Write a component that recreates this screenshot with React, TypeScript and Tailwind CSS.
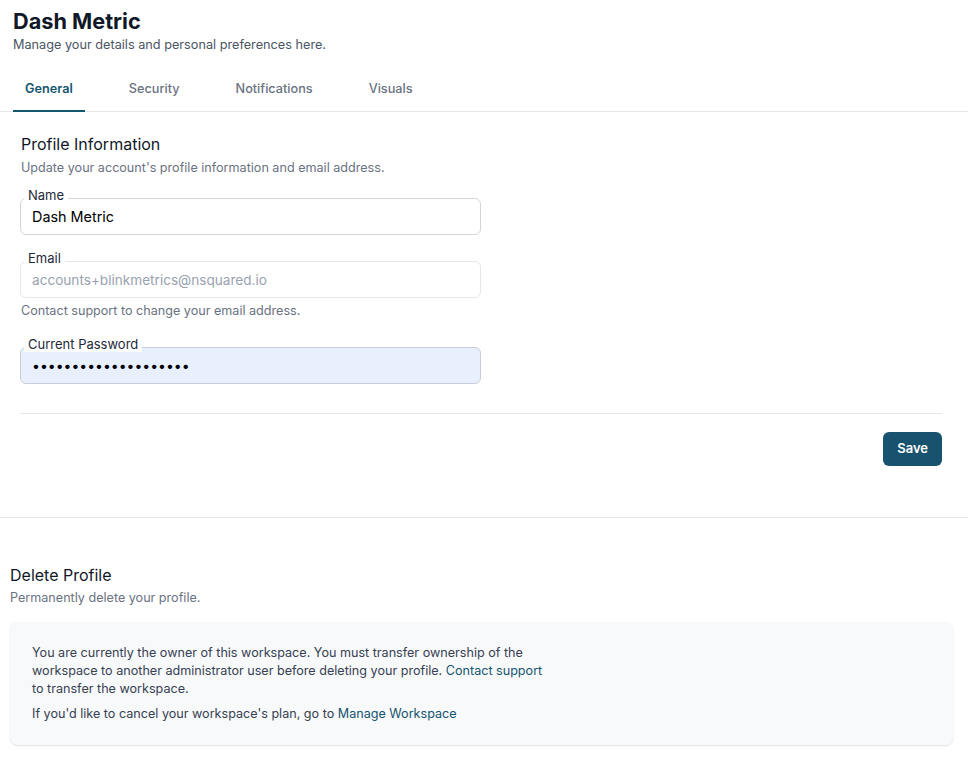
import React from "react";

const tabs = ["General", "Security", "Notifications", "Visuals"];

function Field({
  label,
  value,
  type = "text",
  disabled = false,
  filled = false,
}: {
  label: string;
  value: string;
  type?: string;
  disabled?: boolean;
  filled?: boolean;
}) {
  return (
    <div className="relative w-[461px]">
      <span className="absolute left-[4px] -top-[11px] z-10 bg-white px-[4px] text-[13px] leading-[16px] text-gray-800">
        {label}
      </span>
      <input
        type={type}
        defaultValue={value}
        disabled={disabled}
        className={`h-[37px] w-full rounded-md border px-[11px] outline-none ${
          disabled
            ? "border-gray-200 bg-white text-[13.6px] text-gray-400"
            : filled
            ? "border-[#c9ced6] bg-[#e8f0fe] text-[14px] text-black"
            : "border-gray-300 bg-white text-[14.4px] text-black"
        }`}
      />
    </div>
  );
}

export default function App() {
  return (
    <div className="min-h-screen bg-white font-['Inter',sans-serif] text-gray-900">
      <header className="px-[13px] pt-[7px]">
        <h1 className="text-[21.7px] font-bold leading-[28px] text-[#111827]">
          Dash Metric
        </h1>
        <p className="text-[12.7px] leading-[20px] text-gray-600">
          Manage your details and personal preferences here.
        </p>
      </header>

      <nav className="mt-[12px] flex gap-[32px] border-b border-gray-200 pl-[13px]">
        {tabs.map((tab, i) => (
          <button
            key={tab}
            className={`-mb-px flex h-[45px] items-center border-b-2 px-3 text-[12.7px] ${
              i === 0
                ? "border-[#155570] font-semibold text-[#155570]"
                : "border-transparent font-medium text-gray-500"
            }`}
          >
            {tab}
          </button>
        ))}
      </nav>

      <section className="border-b border-gray-200 pl-[20px] pr-[26px] pt-[20px] pb-[51px]">
        <h2 className="pl-px text-[16px] leading-[24px] text-gray-900">
          Profile Information
        </h2>
        <p className="mt-[2px] pl-px text-[12.6px] leading-[20px] text-gray-500">
          Update your account's profile information and email address.
        </p>

        <div className="mt-[20px] flex flex-col">
          <Field label="Name" value="Dash Metric" />
          <div className="mt-[26px]">
            <Field
              label="Email"
              value="accounts+blinkmetrics@nsquared.io"
              disabled
            />
          </div>
          <p className="mt-[3px] pl-px text-[12.6px] leading-[20px] text-gray-500">
            Contact support to change your email address.
          </p>
          <div className="mt-[26px]">
            <Field
              label="Current Password"
              value="passwordpassword1234"
              type="password"
              filled
            />
          </div>
        </div>

        <div className="mt-[29px] border-t border-gray-200" />
        <div className="mt-[18px] flex justify-end">
          <button className="h-[34px] rounded-md bg-[#17536e] px-[14px] text-[13px] font-semibold text-white">
            Save
          </button>
        </div>
      </section>

      <section className="px-[10px] pr-[15px] pt-[45px] pb-[14px]">
        <h2 className="text-[16px] leading-[24px] text-gray-900">
          Delete Profile
        </h2>
        <p className="mt-px text-[12.6px] leading-[20px] text-gray-500">
          Permanently delete your profile.
        </p>
        <div className="mt-[14px] rounded-lg bg-[#f8f9fa] pl-[22px] pr-4 pt-[22px] pb-[22px] text-[12.6px] leading-[18px] text-gray-700 shadow-[0_1px_2px_rgba(0,0,0,0.12)]">
          <p className="max-w-[525px]">
            You are currently the owner of this workspace. You must transfer
            ownership of the workspace to another administrator user before
            deleting your profile.{" "}
            <a className="text-[#155570]">Contact support</a> to transfer the
            workspace.
          </p>
          <p className="mt-[7px]">
            If you'd like to cancel your workspace's plan, go to{" "}
            <a className="text-[#155570]">Manage Workspace</a>
          </p>
        </div>
      </section>
    </div>
  );
}
